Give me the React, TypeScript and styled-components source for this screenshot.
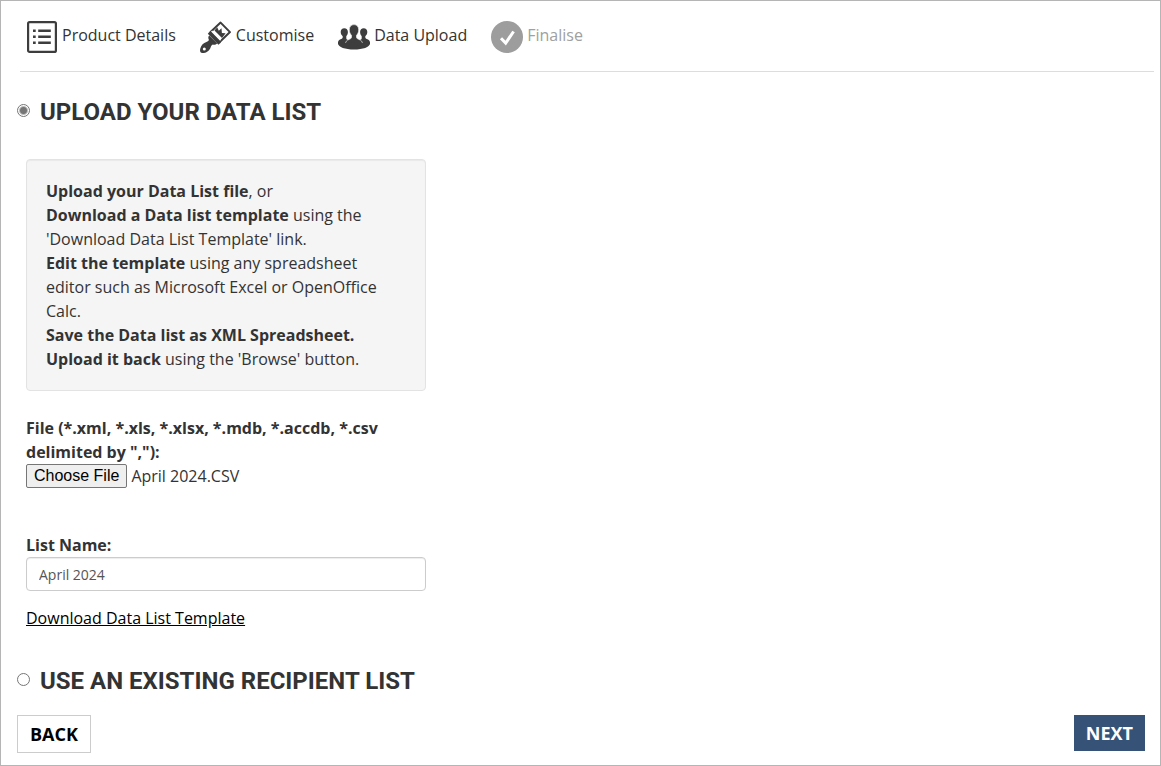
import React, { useRef, useState } from "react";
import styled, { createGlobalStyle } from "styled-components";

const GlobalStyle = createGlobalStyle`
  *, *::before, *::after { box-sizing: border-box; }
  body {
    margin: 0;
    background: #fff;
    color: #333;
    font: 400 16px/24px "Open Sans", "Noto Sans", sans-serif;
  }
`;

const Page = styled.main`
  display: flex;
  flex-direction: column;
  min-height: 100vh;
  border: 1px solid #b5b5b5;
  padding: 20px 6px 12px 16px;
`;

const Steps = styled.ol`
  display: flex;
  flex-wrap: wrap;
  gap: 24px;
  list-style: none;
  margin: 0 0 0 3px;
  padding: 0 6px 18px;
  border-bottom: 1px solid #ddd;
`;

const Step = styled.li<{ $pending?: boolean }>`
  display: flex;
  align-items: flex-start;
  gap: 4px;
  line-height: 28px;
  color: ${(p) => (p.$pending ? "#a0a0a0" : "#333")};
`;

const StepIcon = styled.svg`
  display: block;
  flex: none;
  width: 32px;
  height: 32px;
`;

const Option = styled.label`
  display: flex;
  align-items: center;
  gap: 10px;
`;

const Radio = styled.input`
  appearance: none;
  flex: none;
  width: 13px;
  height: 13px;
  margin: 0 0 3px;
  border: 1px solid #767676;
  border-radius: 50%;
  background: #fff;

  &:checked {
    background: radial-gradient(circle, #767676 3px, #fff 5px);
  }
`;

const OptionTitle = styled.h2`
  margin: 0;
  font: 700 24px/32px Roboto, sans-serif;
  text-transform: uppercase;
`;

const UploadSection = styled.section`
  padding-top: 24px;
`;

const UploadPanel = styled.div`
  max-width: 409px;
  padding: 31px 0 0 9px;
`;

const Well = styled.div`
  padding: 19px;
  border: 1px solid #e3e3e3;
  border-radius: 4px;
  background: #f5f5f5;
  box-shadow: inset 0 1px 1px rgba(0, 0, 0, 0.05);
`;

const Field = styled.div<{ $top: number }>`
  padding-top: ${(p) => p.$top}px;
`;

const FieldLabel = styled.label`
  display: block;
  font-weight: 700;
`;

const FileRow = styled.div`
  display: flex;
  align-items: center;
  gap: 4px;
`;

const FileButton = styled.button`
  height: 24px;
  padding: 0 7px;
  border: 1px solid #767676;
  border-radius: 2px;
  background: #efefef;
  color: #000;
  font: 16px/20px "Liberation Sans", Arial, sans-serif;
`;

const TextInput = styled.input`
  display: block;
  width: 100%;
  height: 34px;
  padding: 6px 12px;
  border: 1px solid #ccc;
  border-radius: 4px;
  background: #fff;
  box-shadow: inset 0 1px 1px rgba(0, 0, 0, 0.075);
  color: #555;
  font: 400 14px/20px "Open Sans", "Noto Sans", sans-serif;
`;

const TemplateLink = styled.a`
  display: inline-block;
  margin-top: 15px;
  color: #000;
  text-decoration: underline;
`;

const ExistingSection = styled.section`
  padding-top: 35px;
`;

const Actions = styled.footer`
  display: flex;
  justify-content: space-between;
  align-items: flex-start;
  padding: 18px 9px 0 0;
`;

const ActionButton = styled.button<{ $primary?: boolean }>`
  height: ${(p) => (p.$primary ? 36 : 38)}px;
  padding: 0 12px;
  border: ${(p) => (p.$primary ? "0" : "1px solid #ccc")};
  background: ${(p) => (p.$primary ? "#365377" : "#fff")};
  color: ${(p) => (p.$primary ? "#fff" : "#000")};
  font: 700 18px/24px "Open Sans", "Noto Sans", sans-serif;
  text-transform: uppercase;
`;

const ListIcon = () => (
  <StepIcon viewBox="0 0 32 32" aria-hidden="true">
    <rect x="2.1" y="1.1" width="27.8" height="29.8" rx="1.5" fill="none" stroke="#3d3d3d" strokeWidth="2.2" />
    <path d="M7 8.500h2.700V11H7zM12.200 8.500h12.600V11H12.200zM7 14.500h2.700V17H7zM12.200 14.500h12.600V17H12.200zM7 20.500h2.700V23H7zM12.200 20.500h12.600V23H12.200z" fill="#3d3d3d" />
  </StepIcon>
);

const BrushIcon = () => (
  <StepIcon viewBox="0 0 32 32" aria-hidden="true">
    <path d="M20.6 1.6 30 11.1 20.2 20.4 10.8 10.8z" fill="#fff" stroke="#3d3d3d" strokeWidth="2" strokeLinejoin="round" />
    <path d="m14.500 9.500 2.700-3.300 1.600 3.600 2.700-2.600.4 4.700 3.700.300-3.600 4.800z" fill="#3d3d3d" />
    <path d="M10 10.2 21 21.4l-2.600 2.300L7.800 12.800z" fill="#3d3d3d" />
    <path d="m11.600 9.900 9 9.300" stroke="#fff" strokeWidth="1.5" />
    <path d="m9.200 14.400 8 8.100c-1.600 1.500-3.200 1.500-4.400 1-1 .4-1.600 1.300-2.200 3C9.400 30 6.300 32 2.400 32 0 32-.3 29.700.3 27.500 1.200 24 3.500 21.900 6.400 21c1.600-.5 2.300-1.200 2.500-2.200-.8-1.500-.9-3 .3-4.400z" fill="#3d3d3d" />
    <circle cx="4.300" cy="28" r="1.500" fill="#fff" />
  </StepIcon>
);

const PeopleIcon = () => (
  <StepIcon viewBox="0 0 32 32" aria-hidden="true">
    <g fill="#3d3d3d">
      <path d="M6.300 7.200c2.200 0 3.600 1.600 3.600 3.900 0 1.800-.7 3.200-1.600 4.100v2c0 1 1 1.500 2.200 2v4H0v-1.700c0-2.300 1.500-3 3.200-3.600 1-.4 1.500-.8 1.500-1.700v-1c-1.200-.9-2-2.300-2-4.100 0-2.300 1.400-3.900 3.600-3.900z" />
      <path d="M25.700 7.200c-2.200 0-3.600 1.600-3.600 3.900 0 1.800.7 3.200 1.600 4.100v2c0 1-1 1.500-2.200 2v4H32v-1.700c0-2.300-1.500-3-3.200-3.600-1-.4-1.500-.8-1.500-1.700v-1c1.200-.9 2-2.300 2-4.100 0-2.300-1.400-3.900-3.600-3.900z" />
      <path d="M0 21.500h32c.4 4.400-6.600 7-16 7s-16.400-2.600-16-7z" />
    </g>
    <path d="M16 3.600c2.900 0 4.700 2.200 4.700 5.200 0 2.300-.9 4.300-2.200 5.500v1.800c0 1.400 1.200 1.900 3 2.600 1.800.7 3 1.800 3 4.500h-17c0-2.700 1.200-3.800 3-4.500 1.800-.7 3-1.200 3-2.600v-1.800c-1.300-1.200-2.200-3.200-2.200-5.500 0-3 1.800-5.200 4.700-5.200z" fill="#3d3d3d" stroke="#fff" strokeWidth=".6" />
    <path d="M6 22h20v4H6z" fill="#3d3d3d" />
  </StepIcon>
);

const CheckIcon = () => (
  <StepIcon viewBox="0 0 32 32" aria-hidden="true">
    <circle cx="16" cy="16" r="16" fill="#9d9d9d" />
    <path d="m10 17.200 4.700 4.900L22.600 10.500" fill="none" stroke="#fff" strokeWidth="3" />
  </StepIcon>
);

export default function App() {
  const fileInput = useRef<HTMLInputElement>(null);
  const [source, setSource] = useState("upload");
  const [fileName, setFileName] = useState("April 2024.CSV");
  const [listName, setListName] = useState("April 2024");

  return (
    <>
      <GlobalStyle />
      <Page>
        <Steps>
          <Step><ListIcon />Product Details</Step>
          <Step><BrushIcon />Customise</Step>
          <Step aria-current="step"><PeopleIcon />Data Upload</Step>
          <Step $pending><CheckIcon />Finalise</Step>
        </Steps>

        <UploadSection>
          <Option>
            <Radio type="radio" name="source" checked={source === "upload"} onChange={() => setSource("upload")} />
            <OptionTitle>Upload your data list</OptionTitle>
          </Option>
          <UploadPanel>
            <Well>
              <strong>Upload your Data List file</strong>, or<br />
              <strong>Download a Data list template</strong> using the 'Download Data List Template' link.<br />
              <strong>Edit the template</strong> using any spreadsheet editor such as Microsoft Excel or OpenOffice Calc.<br />
              <strong>Save the Data list as XML Spreadsheet.</strong><br />
              <strong>Upload it back</strong> using the 'Browse' button.
            </Well>
            <Field $top={25}>
              <FieldLabel htmlFor="data-file">File (*.xml, *.xls, *.xlsx, *.mdb, *.accdb, *.csv delimited by ","):</FieldLabel>
              <FileRow>
                <input
                  ref={fileInput}
                  id="data-file"
                  type="file"
                  hidden
                  accept=".xml,.xls,.xlsx,.mdb,.accdb,.csv"
                  onChange={(e) => setFileName(e.target.files?.[0]?.name ?? fileName)}
                />
                <FileButton type="button" onClick={() => fileInput.current?.click()}>Choose File</FileButton>
                <span>{fileName}</span>
              </FileRow>
            </Field>
            <Field $top={45}>
              <FieldLabel htmlFor="list-name">List Name:</FieldLabel>
              <TextInput id="list-name" type="text" value={listName} onChange={(e) => setListName(e.target.value)} />
            </Field>
            <TemplateLink href="#template">Download Data List Template</TemplateLink>
          </UploadPanel>
        </UploadSection>

        <ExistingSection>
          <Option>
            <Radio type="radio" name="source" checked={source === "existing"} onChange={() => setSource("existing")} />
            <OptionTitle>Use an existing recipient list</OptionTitle>
          </Option>
        </ExistingSection>

        <Actions>
          <ActionButton type="button">Back</ActionButton>
          <ActionButton type="button" $primary>Next</ActionButton>
        </Actions>
      </Page>
    </>
  );
}
